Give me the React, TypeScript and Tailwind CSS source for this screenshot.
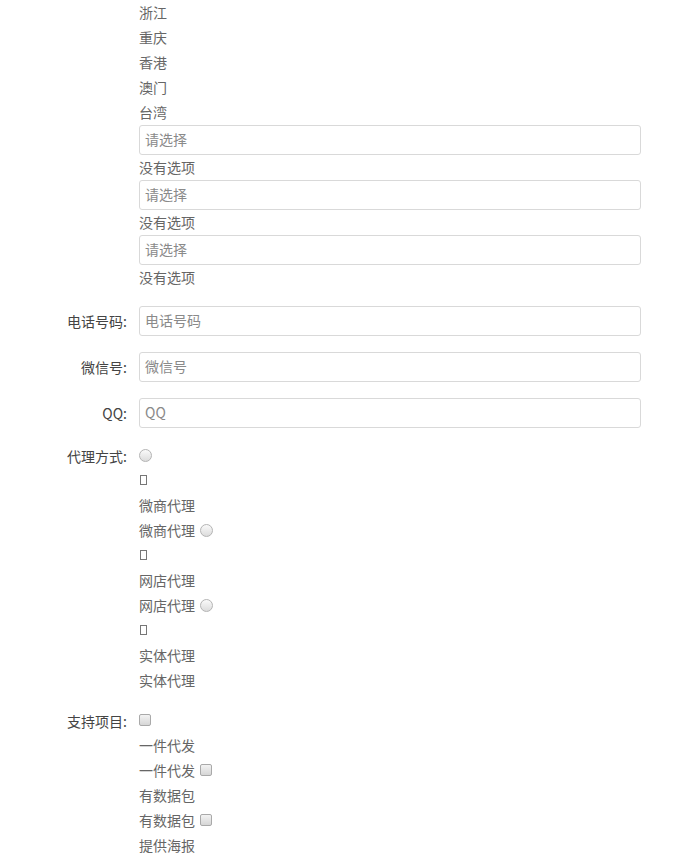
import React from 'react';

const Line = ({ children }: { children: React.ReactNode }) => (
  <div className="h-[25px] flex items-center text-[14px] text-[#666] leading-none pb-[1px]">{children}</div>
);

const SelectBox = () => (
  <div className="h-[30px] w-[502px] border border-[#d9d9d9] rounded-[3px] flex items-center px-[5px] pb-[1px] text-[14px] text-[#8a8a8a] bg-white">
    请选择
  </div>
);

const Radio = ({ className = '' }: { className?: string }) => (
  <span className={`inline-block w-[13px] h-[13px] rounded-full border border-[#b4b4b4] bg-gradient-to-b from-[#fafafa] to-[#dcdcdc] ${className}`} />
);

const Check = ({ className = '' }: { className?: string }) => (
  <span className={`inline-block w-[12px] h-[12px] rounded-[2px] border border-[#a9a9a9] bg-gradient-to-b from-[#f3f3f3] to-[#d6d6d6] ${className}`} />
);

const Tofu = () => <span className="inline-block w-[7px] h-[10px] border border-[#777] ml-[1px]" />;

const Label = ({ children }: { children: React.ReactNode }) => (
  <div className="w-[127px] mr-[12px] shrink-0 text-right text-[14px] text-[#444] leading-none">{children}</div>
);

const InputRow = ({ label, ph }: { label: string; ph: string }) => (
  <div className="flex items-center h-[30px]">
    <Label>{label}</Label>
    <div className="h-[30px] w-[502px] border border-[#d9d9d9] rounded-[3px] flex items-center px-[5px] pb-[1px] text-[14px] text-[#8a8a8a] bg-white">
      {ph}
    </div>
  </div>
);

export default function App() {
  const regions = ['浙江', '重庆', '香港', '澳门', '台湾'];
  return (
    <div className="min-h-screen bg-white" style={{ fontFamily: '"Noto Sans CJK SC", "Noto Sans", sans-serif' }}>
      <div className="pl-[139px] flex flex-col">
        {regions.map((r) => (
          <Line key={r}>{r}</Line>
        ))}
        {[0, 1, 2].map((i) => (
          <div key={i}>
            <SelectBox />
            <Line>没有选项</Line>
          </div>
        ))}
      </div>

      <div className="mt-[16px] flex flex-col gap-[16px]">
        <InputRow label="电话号码:" ph="电话号码" />
        <InputRow label="微信号:" ph="微信号" />
        <InputRow label="QQ:" ph="QQ" />
      </div>

      <div className="mt-[15px] flex">
        <div className="h-[25px] flex items-center"><Label>代理方式:</Label></div>
        <div className="flex flex-col">
          <Line><Radio /></Line>
          <Line><Tofu /></Line>
          <Line>微商代理</Line>
          <Line>微商代理<Radio className="ml-[5px]" /></Line>
          <Line><Tofu /></Line>
          <Line>网店代理</Line>
          <Line>网店代理<Radio className="ml-[5px]" /></Line>
          <Line><Tofu /></Line>
          <Line>实体代理</Line>
          <Line>实体代理</Line>
        </div>
      </div>

      <div className="mt-[15px] flex">
        <div className="h-[25px] flex items-center"><Label>支持项目:</Label></div>
        <div className="flex flex-col">
          <Line><Check /></Line>
          <Line>一件代发</Line>
          <Line>一件代发<Check className="ml-[5px]" /></Line>
          <Line>有数据包</Line>
          <Line>有数据包<Check className="ml-[5px]" /></Line>
          <Line>提供海报</Line>
        </div>
      </div>
    </div>
  );
}
